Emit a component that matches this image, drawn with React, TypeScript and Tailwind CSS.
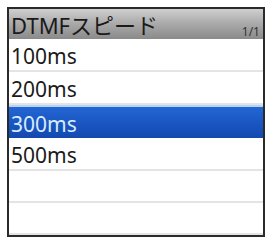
import React from "react";

const rows = [
  { label: "100ms", h: "h-[33px]" },
  { label: "200ms", h: "h-[33px]" },
  { label: "300ms", h: "h-[33px]", sel: true },
  { label: "500ms", h: "h-[33px]" },
  { label: "", h: "h-[32px]" },
  { label: "", h: "h-[32px]" },
];

export default function App() {
  return (
    <div className="w-[270px] h-[237px] bg-white pl-[7px] pt-[7px]" style={{ fontFamily: '"Noto Sans", "Noto Sans CJK JP", sans-serif' }}>
      <div className="w-[258px] h-[230px] border-2 border-[#2a2a2a] flex flex-col overflow-hidden">
        <div className="h-[30px] shrink-0 flex items-end justify-between pl-[2px] pr-[3px] bg-gradient-to-b from-[#cfcfcf] via-[#a9a9a9] to-[#8a8a8a]">
          <span className="text-[22px] leading-none text-[#1a1a1a] pb-[3px]">DTMFスピード</span>
          <span className="text-[12px] leading-none text-[#333] pb-[1px]">1/1</span>
        </div>
        {rows.map((r, i) =>
          r.sel ? (
            <div key={i} className={`${r.h} shrink-0 flex items-center pl-[2px] pt-[3px] bg-gradient-to-b from-[#2266d4] to-[#1448b0] border-t-2 border-[#b8d4f4] text-[#d8ecff]`}>
              <span className="text-[21px] leading-none">{r.label}</span>
            </div>
          ) : (
            <div key={i} className={`${r.h} shrink-0 flex items-center pl-[2px] pt-[3px] border-b-2 border-[#e4e4e4] text-[#1a1a1a]`}>
              <span className="text-[21px] leading-none">{r.label}</span>
            </div>
          )
        )}
      </div>
    </div>
  );
}
